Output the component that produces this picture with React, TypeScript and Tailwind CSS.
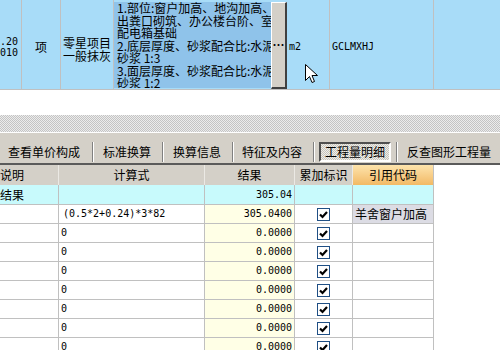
import React from "react";

const cjk = "font-['Noto_Sans_CJK_SC','Noto_Sans',sans-serif] text-[12px]";
const mono = "font-['DejaVu_Sans_Mono','Liberation_Mono',monospace] text-[10px]";

const descLines = [
  "1.部位:窗户加高、地沟加高、",
  "出粪口砌筑、办公楼台阶、室",
  "配电箱基础",
  "2.底层厚度、砂浆配合比:水泥",
  "砂浆 1:3",
  "3.面层厚度、砂浆配合比:水泥",
  "砂浆 1:2",
];

const rows = [
  { formula: "(0.5*2+0.24)*3*82", result: "305.0400", code: "羊舍窗户加高" },
  { formula: "0", result: "0.0000", code: "" },
  { formula: "0", result: "0.0000", code: "" },
  { formula: "0", result: "0.0000", code: "" },
  { formula: "0", result: "0.0000", code: "" },
  { formula: "0", result: "0.0000", code: "" },
  { formula: "0", result: "0.0000", code: "" },
  { formula: "0", result: "0.0000", code: "" },
];

function Check() {
  return (
    <div className="w-[13px] h-[13px] border border-[#1f4f85] bg-white flex items-center justify-center">
      <svg width="11" height="11" viewBox="0 0 11 11">
        <polyline points="2,5.5 4.5,8 9,3" fill="none" stroke="#000" strokeWidth="2.2" />
      </svg>
    </div>
  );
}

function Sep() {
  return <div className="w-[2px] h-[20px] border-l border-l-[#808080] border-r border-r-white" />;
}

export default function App() {
  return (
    <div className={`w-[500px] h-[350px] overflow-hidden bg-white flex flex-col ${cjk} text-black`}>
      {/* selected bill row */}
      <div className="relative flex h-[90px] shrink-0 bg-[#a8dcf8] border-b border-[#c0c0c0]">
        <div className={`w-[22px] border-r border-[#c0c0c0] flex flex-col justify-center pt-[4px] leading-[11px] ${mono}`}>
          <span>.20</span>
          <span>010</span>
        </div>
        <div className="w-[39px] border-r border-[#c0c0c0] flex items-center justify-center pt-[4px] leading-[12px]">项</div>
        <div className="w-[53px] border-r border-[#c0c0c0] flex flex-col justify-center pl-[2px] pt-[10px] leading-[12.5px]">
          <span>零星项目</span>
          <span>一般抹灰</span>
        </div>
        <div className="w-[216px] border-r border-[#c0c0c0] flex">
          <div className="w-[157px] mt-[2px] mb-[1px] bg-[#8fc3ea] overflow-hidden pl-[3px] leading-[12.5px] whitespace-nowrap">
            {descLines.map((l) => (
              <div key={l}>{l}</div>
            ))}
          </div>
          <div className="w-[16px] mt-[2px] bg-[#d4d0c8] border-t border-l border-t-white border-l-white border-r-2 border-b-2 border-r-[#404040] border-b-[#404040] flex items-center justify-center font-bold leading-none">
            …
          </div>
          <div className={`flex items-center pl-[2px] pt-[4px] ${mono}`}>m2</div>
        </div>
        <div className={`w-[104px] border-r border-[#c0c0c0] flex items-center pl-[2px] pt-[4px] ${mono}`}>GCLMXHJ</div>
        <div className="flex-1" />
        <svg className="absolute left-[305px] top-[64px]" width="14" height="22" viewBox="0 0 14 22">
          <path d="M0.5 0.5 L0.5 16.5 L4.5 12.5 L7 18.5 L9.5 17.5 L7 11.5 L12.5 11.5 Z" fill="#fff" stroke="#000" strokeWidth="1" />
        </svg>
      </div>

      <div className="h-[25px] shrink-0 bg-white" />

      {/* splitter */}
      <div className="h-[17px] shrink-0 bg-[repeating-conic-gradient(#c4c4c4_0%_25%,#ececec_0%_50%)] bg-size-[2px_2px]" />

      {/* tab bar */}
      <div className="h-[33px] shrink-0 bg-[#d4d0c8] border-t border-t-white border-b-2 border-b-[#5a5a5a] flex items-end pb-px whitespace-nowrap leading-[20px]">
        <span className="pl-[8px] pr-[12px]">查看单价构成</span>
        <Sep />
        <span className="pl-[9px] pr-[11px]">标准换算</span>
        <Sep />
        <span className="pl-[9px] pr-[11px]">换算信息</span>
        <Sep />
        <span className="pl-[8px] pr-[11px]">特征及内容</span>
        <Sep />
        <span className="ml-[4px] mr-[5px] w-[72px] h-[20px] flex items-center justify-center border-2 border-t-[#505050] border-l-[#505050] border-r-white border-b-white bg-[repeating-conic-gradient(#c8c4bc_0%_25%,#eeeeea_0%_50%)] bg-size-[2px_2px]">
          工程量明细
        </span>
        <Sep />
        <span className="pl-[9px]">反查图形工程量</span>
      </div>

      {/* header */}
      <div className="flex h-[20px] shrink-0 leading-[20px]">
        <div className="w-[59px] bg-[#d4d0c8] border-r border-[#ebe9e4] pl-0">说明</div>
        <div className="w-[146px] bg-[#d4d0c8] border-r border-[#ebe9e4] text-center">计算式</div>
        <div className="w-[90px] bg-[#d4d0c8] border-r border-[#ebe9e4] text-center">结果</div>
        <div className="w-[58px] bg-[#d4d0c8] border-r border-[#ebe9e4] text-center">累加标识</div>
        <div className="w-[81px] bg-gradient-to-b from-[#fde4ac] to-[#f2b964] border-r border-[#c0c0c0] text-center">引用代码</div>
        <div className="flex-1 bg-white" />
      </div>

      {/* body */}
      <div className="flex flex-col">
        <div className="flex h-[20px] shrink-0 w-[434px] bg-[#c8fafc] border-b border-[#c0c0c0] leading-[19px]">
          <div className="w-[59px] border-r border-[#c0c0c0]">结果</div>
          <div className="w-[146px] border-r border-[#c0c0c0]" />
          <div className={`w-[90px] border-r border-[#c0c0c0] text-right pr-[2px] ${mono}`}>305.04</div>
          <div className="w-[58px] border-r border-[#c0c0c0]" />
          <div className="w-[81px] border-r border-[#c0c0c0]" />
        </div>
        {rows.map((r, i) => (
          <div key={i} className="flex h-[19px] shrink-0 w-[434px] border-b border-[#c0c0c0] leading-[18px]">
            <div className="w-[59px] border-r border-[#c0c0c0] bg-white" />
            <div className={`w-[146px] border-r border-[#c0c0c0] bg-white ${i === 0 ? "pl-[4px]" : "pl-[2px]"} ${mono}`}>{r.formula}</div>
            <div className={`w-[90px] border-r border-[#c0c0c0] bg-[#ffffe6] text-right pr-[2px] ${mono}`}>{r.result}</div>
            <div className="w-[58px] border-r border-[#c0c0c0] bg-white flex items-center justify-center">
              <Check />
            </div>
            <div className={`w-[81px] border-r border-[#c0c0c0] pl-[2px] ${r.code ? "bg-[#dcdce4]" : "bg-white"}`}>{r.code}</div>
          </div>
        ))}
      </div>
    </div>
  );
}
